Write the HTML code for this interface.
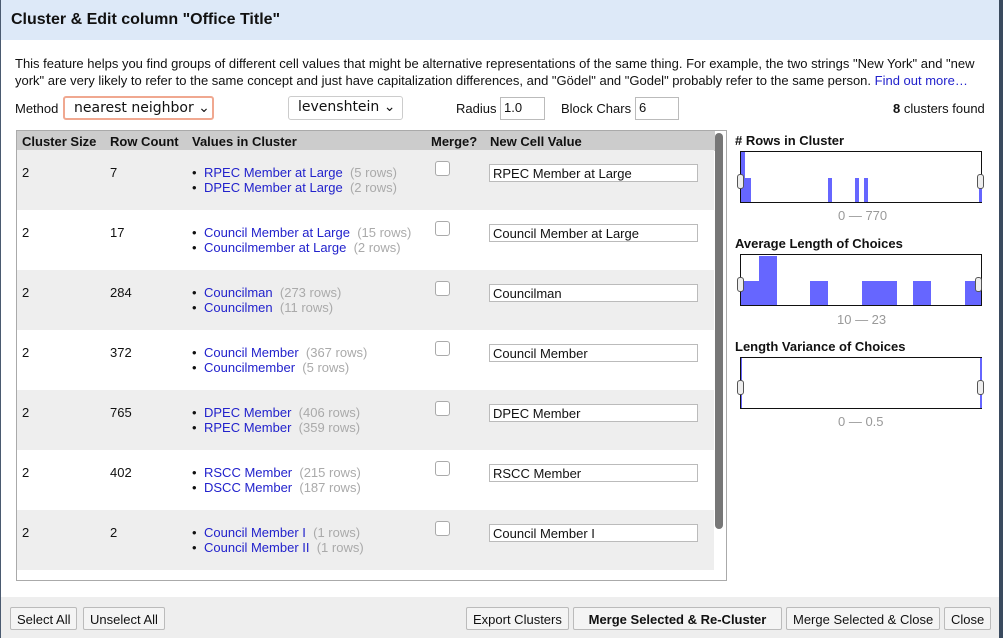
<!DOCTYPE html>
<html><head><meta charset="utf-8"><style>
*{box-sizing:border-box}
body{margin:0;width:1003px;height:638px;overflow:hidden;background:#3a4a5e;font-family:"Liberation Sans",sans-serif;font-size:13px;color:#111;position:relative}
.dlg{position:absolute;left:0;top:0;width:999px;height:638px;background:#fff}
.lb{position:absolute;left:0;top:0;width:1px;height:638px;background:#4a5a70}
.hdr{position:absolute;left:1px;top:0;width:998px;height:40px;background:#dde9f8;font-weight:bold;font-size:16px;padding:11px 0 0 10px}
.a{position:absolute;white-space:nowrap}
.sel{border:1px solid #ccc;border-radius:3px;background:#fff;font-family:"DejaVu Sans",sans-serif;font-size:14px;padding:2px 0 0 9px}
.inp{border:1px solid #bbb;background:#fff;padding:2px 0 0 3px}
.tbl{position:absolute;left:16px;top:130px;width:711px;height:451px;border:1px solid #aaa;background:#fff;overflow:hidden}
.th{position:absolute;left:0;top:0;width:698px;height:20px;background:#ccc;font-weight:bold}
.lk{color:#22c}.gr{color:#aaa}
.cb{position:absolute;width:15px;height:15px;border:1px solid #aaa;border-radius:3px;background:#fff}
.hist{position:absolute;left:740px;width:242px;height:52px;border:1px solid #111;background:#fff}
.bar{position:absolute;background:#6666ff;bottom:0}
.hd{position:absolute;width:7px;height:15px;border:1px solid #555;border-radius:3px;background:#eee;top:22px}
.foot{position:absolute;left:1px;top:597px;width:998px;height:41px;background:#eee}
.btn{position:absolute;top:607px;height:23px;border:1px solid #bbb;border-radius:2px;background:#f4f4f4;padding:4px 6px 0;white-space:nowrap}
</style></head><body><div class="dlg">
<div class="lb"></div>
<div class="hdr">Cluster &amp; Edit column "Office Title"</div>
<div class="a" style="left:15px;top:55px;line-height:17px">This feature helps you find groups of different cell values that might be alternative representations of the same thing. For example, the two strings "New York" and "new<br>york" are very likely to refer to the same concept and just have capitalization differences, and "Gödel" and "Godel" probably refer to the same person. <span class="lk">Find out more…</span></div>
<div class="a" style="left:15px;top:101px">Method</div>
<div class="a sel" style="left:63px;top:96px;width:151px;height:24px;border:2px solid #f0a890">nearest neighbor ⌄</div>
<div class="a sel" style="left:288px;top:96px;width:115px;height:24px">levenshtein ⌄</div>
<div class="a" style="left:456px;top:101px">Radius</div>
<div class="a inp" style="left:500px;top:97px;width:45px;height:23px">1.0</div>
<div class="a" style="left:561px;top:101px">Block Chars</div>
<div class="a inp" style="left:635px;top:97px;width:44px;height:23px">6</div>
<div class="a" style="left:893px;top:101px"><b>8</b> clusters found</div>
<div class="tbl">
<div class="th"><span class="a" style="left:5px;top:3px">Cluster Size</span><span class="a" style="left:93px;top:3px">Row Count</span><span class="a" style="left:175px;top:3px">Values in Cluster</span><span class="a" style="left:414px;top:3px">Merge?</span><span class="a" style="left:473px;top:3px">New Cell Value</span></div>
<div style="position:absolute;left:698px;top:2px;width:8px;height:396px;background:#777;border-radius:4px"></div>
</div>
<div id="rows"></div>
<div class="a" style="left:735px;top:133px;font-weight:bold">&#35; Rows in Cluster</div>
<div class="hist" style="top:151px"><div class="bar" style="left:0;width:4px;height:50px"></div><div class="bar" style="left:0;width:10px;height:24px"></div><div class="bar" style="left:87px;width:4px;height:24px"></div><div class="bar" style="left:114px;width:4px;height:24px"></div><div class="bar" style="left:123px;width:4px;height:24px"></div><div class="bar" style="left:238px;width:3px;height:24px"></div><div class="hd" style="left:-4px"></div><div class="hd" style="left:236px"></div></div>
<div class="a" style="left:838px;top:208px;color:#999">0 — 770</div>
<div class="a" style="left:735px;top:236px;font-weight:bold">Average Length of Choices</div>
<div class="hist" style="top:254px"><div class="bar" style="left:0;width:18px;height:24px"></div><div class="bar" style="left:18px;width:18px;height:49px"></div><div class="bar" style="left:69px;width:18px;height:24px"></div><div class="bar" style="left:121px;width:35px;height:24px"></div><div class="bar" style="left:172px;width:18px;height:24px"></div><div class="bar" style="left:224px;width:16px;height:24px"></div><div class="hd" style="left:-4px"></div><div class="hd" style="left:234px"></div></div>
<div class="a" style="left:837px;top:312px;color:#999">10 — 23</div>
<div class="a" style="left:735px;top:339px;font-weight:bold">Length Variance of Choices</div>
<div class="hist" style="top:357px"><div class="bar" style="left:0;width:1px;height:50px"></div><div class="bar" style="left:239px;width:2px;height:50px"></div><div class="hd" style="left:-4px"></div><div class="hd" style="left:236px"></div></div>
<div class="a" style="left:838px;top:414px;color:#999">0 — 0.5</div>
<div class="foot"></div>
<div class="btn" style="left:10px">Select All</div>
<div class="btn" style="left:83px">Unselect All</div>
<div class="btn" style="left:466px">Export Clusters</div>
<div class="btn" style="left:573px;width:209px;text-align:center;font-weight:bold">Merge Selected &amp; Re-Cluster</div>
<div class="btn" style="left:786px">Merge Selected &amp; Close</div>
<div class="btn" style="left:944px">Close</div>
</div>
<script>
var d=[["2","7","RPEC Member at Large","5","DPEC Member at Large","2"],["2","17","Council Member at Large","15","Councilmember at Large","2"],["2","284","Councilman","273","Councilmen","11"],["2","372","Council Member","367","Councilmember","5"],["2","765","DPEC Member","406","RPEC Member","359"],["2","402","RSCC Member","215","DSCC Member","187"],["2","2","Council Member I","1","Council Member II","1"]];
var h="";d.forEach(function(r,i){var t=150+i*60;h+='<div class="a" style="left:17px;top:'+t+'px;width:697px;height:60px;background:'+(i%2?'#fff':'#eee')+'"></div>'+
'<div class="a" style="left:22px;top:'+(t+15)+'px">'+r[0]+'</div><div class="a" style="left:110px;top:'+(t+15)+'px">'+r[1]+'</div>'+
'<div class="a" style="left:192px;top:'+(t+15)+'px;line-height:15px">•<br>•</div>'+
'<div class="a" style="left:204px;top:'+(t+15)+'px;line-height:15px"><span class="lk">'+r[2]+'</span> <span class="gr">&nbsp;('+r[3]+' rows)</span><br><span class="lk">'+r[4]+'</span> <span class="gr">&nbsp;('+r[5]+' rows)</span></div>'+
'<div class="cb" style="left:435px;top:'+(t+11)+'px"></div><div class="a inp" style="left:489px;top:'+(t+14)+'px;width:209px;height:18px;padding-top:1px">'+r[2]+'</div>';});
document.getElementById("rows").innerHTML=h;
</script>
</body></html>
